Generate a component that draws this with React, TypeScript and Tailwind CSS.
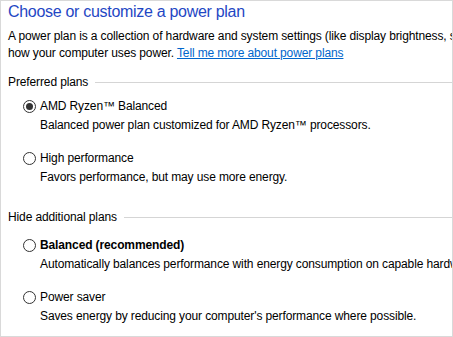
type Plan = {
  id: string;
  name: string;
  description: string;
  bold?: boolean;
};

const preferredPlans: Plan[] = [
  {
    id: "amd",
    name: "AMD Ryzen™ Balanced",
    description: "Balanced power plan customized for AMD Ryzen™ processors.",
  },
  {
    id: "high",
    name: "High performance",
    description: "Favors performance, but may use more energy.",
  },
];

const additionalPlans: Plan[] = [
  {
    id: "balanced",
    name: "Balanced (recommended)",
    description:
      "Automatically balances performance with energy consumption on capable hardware.",
    bold: true,
  },
  {
    id: "saver",
    name: "Power saver",
    description: "Saves energy by reducing your computer's performance where possible.",
  },
];

const Radio = ({ checked }: { checked: boolean }) => (
  <span className="flex h-[13px] w-[13px] shrink-0 items-center justify-center rounded-full border border-[#333] bg-white">
    {checked ? <span className="h-[7px] w-[7px] rounded-full bg-[#333]" /> : null}
  </span>
);

const GroupHeader = ({ label }: { label: string }) => (
  <div className="flex items-center gap-[7px]">
    <span className="whitespace-nowrap">{label}</span>
    <span className="h-px flex-1 bg-[#d5d5d5]" />
  </div>
);

const PlanRow = ({ plan, checked }: { plan: Plan; checked: boolean }) => (
  <div className="flex flex-col pl-[15px]">
    <label className="flex h-[16px] items-center gap-[4px]">
      <Radio checked={checked} />
      <span className={plan.bold ? "font-bold" : ""}>{plan.name}</span>
    </label>
    <p className="mt-[3px] whitespace-nowrap pl-[17px]">{plan.description}</p>
  </div>
);

const App = () => {
  return (
    <div
      className="h-[337px] w-[453px] overflow-hidden border border-[#d9d9d9] bg-white text-[12px] leading-[16px] tracking-[-0.12px] text-black"
      style={{ fontFamily: '"Segoe UI", "Liberation Sans", Arial, sans-serif' }}
    >
      <div className="flex flex-col pl-[7px] pt-[1px]">
        <h1 className="text-[16px] leading-[20px] tracking-[-0.3px] text-[#1f47c4]">
          Choose or customize a power plan
        </h1>
        <p className="mt-[6px] whitespace-nowrap leading-[17px]">
          A power plan is a collection of hardware and system settings (like display brightness, sleep, etc.) that manages
          <br />
          how your computer uses power.{" "}
          <a href="#" className="text-[#0066cc] underline">
            Tell me more about power plans
          </a>
        </p>
        <div className="mt-[12px]">
          <GroupHeader label="Preferred plans" />
        </div>
        <div className="mt-[8px] flex flex-col gap-[17px]">
          {preferredPlans.map((plan, i) => (
            <PlanRow key={plan.id} plan={plan} checked={i === 0} />
          ))}
        </div>
        <div className="mt-[24px]">
          <GroupHeader label="Hide additional plans" />
        </div>
        <div className="mt-[12px] flex flex-col gap-[17px]">
          {additionalPlans.map((plan) => (
            <PlanRow key={plan.id} plan={plan} checked={false} />
          ))}
        </div>
      </div>
    </div>
  );
};

export default App;
